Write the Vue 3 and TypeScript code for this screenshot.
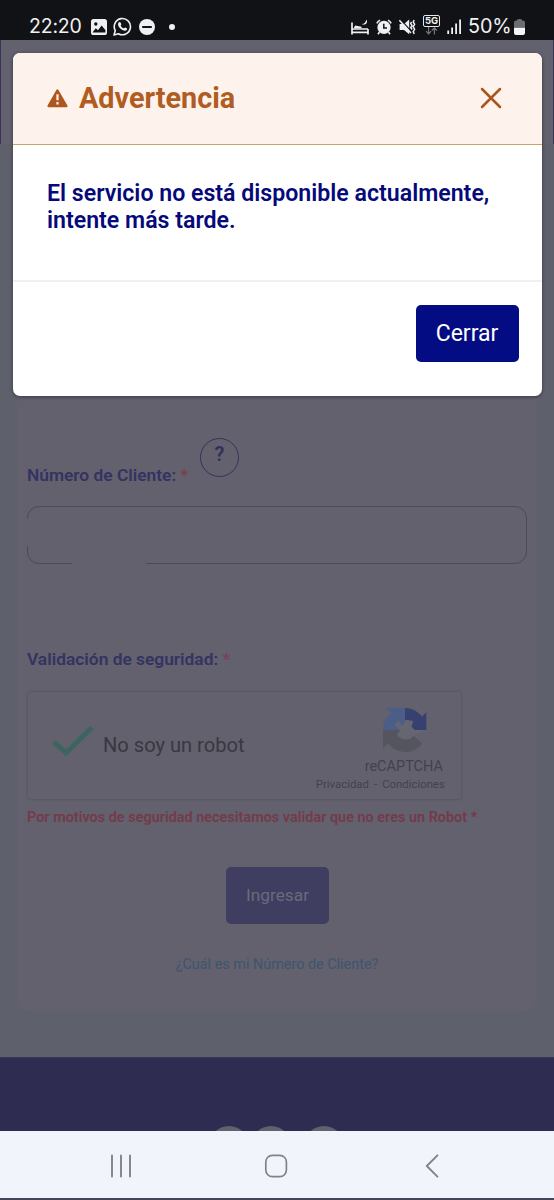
<script setup lang="ts">
const socialLinks: string[] = ['first', 'second', 'third']
</script>

<template>
  <div class="phone">
    <header class="status">
      <div class="status-left">
        <span class="clock">22:20</span>
        <svg class="i-photo" width="16" height="16" viewBox="0 0 16 16">
          <rect width="16" height="16" rx="2.6" fill="#eef0f2" />
          <circle cx="4.8" cy="5" r="1.7" fill="#111216" />
          <path d="M1.6 13.2 L4.8 9.2 L7 11.2 L10.6 6.6 L14.4 11 V13.4 H1.6Z" fill="#111216" />
        </svg>
        <svg class="i-chat" width="19" height="19" viewBox="0 0 19 19">
          <path d="M1 18 L2.3 13.6 A8.1 8.1 0 1 1 5.4 16.7 Z" fill="none" stroke="#eef0f2" stroke-width="1.6" stroke-linejoin="round" />
          <path d="M6.2 5.2 C7 4.6 7.5 5.2 8.3 7 C8.6 7.7 7.3 8.2 7.8 9 C8.6 10.3 9.4 10.9 10.6 11.3 C11.3 11.5 11.6 10.2 12.3 10.4 L14 11.4 C14.5 12 13.5 13.7 11.8 13.7 C8.8 13.6 5.1 10.1 5 7.3 C5 6.4 5.5 5.6 6.2 5.2Z" fill="#eef0f2" />
        </svg>
        <svg class="i-dnd" width="16" height="16" viewBox="0 0 16 16">
          <circle cx="8" cy="8" r="8" fill="#eef0f2" />
          <path d="M3.2 8 H12.8" stroke="#111216" stroke-width="2" />
        </svg>
        <span class="more"></span>
      </div>
      <div class="status-right">
        <svg width="18" height="16" viewBox="0 0 18 16" class="i-bed">
          <path d="M1 3.5 V15.5 M1 10 H17 M1 13.4 H17 M17 10 V15.5" fill="none" stroke="#eef0f2" stroke-width="1.7" />
          <path d="M3 8.6 L4.2 6.4 L10.5 7.8 V9.2 H3Z" fill="#eef0f2" />
          <path d="M15.3 0.4 C17.6 3.4 14 7.2 10.7 4.9 C13.4 5 14.8 3.2 15.3 .4Z" fill="#eef0f2" />
        </svg>
        <svg width="16" height="16" viewBox="0 0 16 16" class="i-alarm">
          <circle cx="8" cy="8.4" r="6.6" fill="#eef0f2" />
          <path d="M7.8 4.7 V9 H11" fill="none" stroke="#111216" stroke-width="1.5" />
          <path d="M.8 4.3 A8 8 0 0 1 4 1.1 M12 1.1 A8 8 0 0 1 15.2 4.3 M3.5 13 L2 15.2 M12.5 13 L14 15.2" fill="none" stroke="#eef0f2" stroke-width="1.6" />
        </svg>
        <svg width="17" height="16" viewBox="0 0 17 16" class="i-mute">
          <path d="M.6 5 H5 L10.2 .6 V15.2 L5 11 H.6Z" fill="#eef0f2" />
          <path d="M1.4 .4 L12.5 12.6" stroke="#111216" stroke-width="1.3" />
          <path d="M.4 1.2 L12 14" stroke="#eef0f2" stroke-width="1.5" />
          <path d="M12.6 3 L11.7 4.5 L13 6.5 L11.8 8.5 L13 10.5 M15.2 1 L14.2 3 L15.6 5.3 L14.2 7.8 L15.6 10.3 L14.2 12.6 L15.2 15" fill="none" stroke="#eef0f2" stroke-width="1.5" />
        </svg>
        <div class="net">
          <span class="net-label">5G</span>
          <svg width="13" height="8" viewBox="0 0 13 8">
            <path d="M3.6 0 V6.8 M1 4.2 L3.6 6.8 L6.2 4.2 M9.4 7.5 V.9 M6.8 3.5 L9.4 .9 L12 3.5" fill="none" stroke="#75767a" stroke-width="1.2" />
          </svg>
        </div>
        <svg width="15" height="15" viewBox="0 0 15 15" class="i-signal">
          <path d="M1.2 11.6 V15 M5.1 8.4 V15 M9.1 4.5 V15 M13.1 .4 V15" stroke="#eef0f2" stroke-width="1.8" />
        </svg>
        <span class="percent">50%</span>
        <svg width="11" height="16" viewBox="0 0 11 16" class="i-battery">
          <path d="M0 8.8 V3.5 Q0 1.5 2 1.5 H3 Q3 0 4.4 0 H6.6 Q8 0 8 1.5 H9 Q11 1.5 11 3.5 V8.8Z" fill="#6c6d70" />
          <path d="M0 8.8 H11 V14 Q11 16 9 16 H2 Q0 16 0 14Z" fill="#f4f5f6" />
        </svg>
      </div>
    </header>

    <main class="page">
      <div class="banner-edge"></div>
      <section class="card">
        <div class="label-row">
          <label class="label">Número de Cliente: <b class="req">*</b></label>
          <span class="help">?</span>
        </div>
        <div class="field">
          <span class="gap-left"></span>
          <span class="gap-bottom"></span>
        </div>
        <div class="label second">Validación de seguridad: <b class="req soft">*</b></div>
        <div class="captcha">
          <svg class="check" width="42" height="32" viewBox="0 0 42 32">
            <path d="M2 17 L14 28 L40 2.5" fill="none" stroke="#3c655f" stroke-width="4.8" />
          </svg>
          <span class="robot">No soy un robot</span>
          <div class="brand">
            <svg class="logo" width="44" height="44" viewBox="0 0 64 64">
              <path d="M32 0 C41.8 0 50.5 4.8 56.5 12.2 L63 6 V32 H32Z" fill="#37416f" />
              <path d="M32 0 H4.6 L12.2 7.5 C4.8 13.5 0 22 0 32 H32Z" fill="#4c5e88" />
              <path d="M0 32 V58 L7.5 51.8 C13.5 59.3 22.3 64 32 64 C42.4 64 51.3 59.5 56.9 51.6 L44.8 40 L32 32Z" fill="#555560" />
              <path d="M17 25 L22.5 18 L28 26 L33 17 L44 19 L41.5 27 L46 32 H63 L45 40.5 C39 48 25 48 20.5 38 L25 32.5Z" fill="#666572" />
            </svg>
            <span class="brand-name">reCAPTCHA</span>
            <span class="brand-links">Privacidad&nbsp;-&nbsp;Condiciones</span>
          </div>
        </div>
        <p class="error">Por motivos de seguridad necesitamos validar que no eres un Robot *</p>
        <button class="enter" type="button">Ingresar</button>
        <a class="which">¿Cuál es mi Número de Cliente?</a>
      </section>
      <footer class="footer">
        <span v-for="s in socialLinks" :key="s" class="social" :class="s"></span>
      </footer>

      <div class="dialog" role="dialog">
        <div class="dialog-head">
          <svg width="21" height="19" viewBox="0 0 21 19" class="warn">
            <path d="M10.4 1.6 L19.4 17 H1.6 Z" fill="#ad571e" stroke="#ad571e" stroke-width="2.4" stroke-linejoin="round" />
            <path d="M10.5 5.2 V11.3 M10.5 13 V15.5" stroke="#fdf3ec" stroke-width="2.2" />
          </svg>
          <h1 class="title">Advertencia</h1>
          <svg width="22" height="22" viewBox="0 0 22 22" class="close">
            <path d="M2 2 L20 20 M20 2 L2 20" stroke="#a8561f" stroke-width="2.5" stroke-linecap="round" />
          </svg>
        </div>
        <div class="dialog-body">El servicio no está disponible actualmente,<br />intente más tarde.</div>
        <div class="dialog-foot">
          <button class="dismiss" type="button">Cerrar</button>
        </div>
      </div>
    </main>

    <nav class="nav">
      <svg width="22" height="24" viewBox="0 0 22 24">
        <path d="M2 1.5 V22.5 M11 1.5 V22.5 M20 1.5 V22.5" stroke="#808388" stroke-width="1.9" stroke-linecap="round" />
      </svg>
      <svg class="home" width="24" height="24" viewBox="0 0 24 24">
        <rect x="1.8" y="1.3" width="20.6" height="21.4" rx="6.6" fill="none" stroke="#808388" stroke-width="1.7" />
      </svg>
      <svg width="14" height="24" viewBox="0 0 14 24">
        <path d="M12.4 1.3 L1.8 12 L12.4 22.7" fill="none" stroke="#808388" stroke-width="1.9" stroke-linecap="round" stroke-linejoin="round" />
      </svg>
    </nav>
  </div>
</template>

<style>
body {
  margin: 0;
}
</style>

<style scoped>
.phone {
  width: 554px;
  height: 1200px;
  display: flex;
  flex-direction: column;
  overflow: hidden;
  font-family: Roboto, "Liberation Sans", sans-serif;
  background: #5e606c;
}
.phone * {
  box-sizing: border-box;
}
.status {
  height: 40px;
  flex: none;
  background: #111216;
  color: #f0f1f3;
  display: flex;
  justify-content: space-between;
  padding: 12px 29px 0 29px;
  font: 400 19.5px/29px Inter, sans-serif;
}
.status-left,
.status-right {
  display: flex;
  height: 29px;
  align-items: center;
}
.clock {
  width: 62px;
  letter-spacing: -0.2px;
}
.i-chat {
  margin-left: 6px;
}
.i-dnd {
  margin-left: 7px;
}
.more {
  width: 6px;
  height: 6px;
  margin-left: 14px;
  border-radius: 50%;
  background: #eef0f2;
}
.i-alarm {
  margin-left: 7px;
}
.i-mute {
  margin-left: 7px;
}
.net {
  width: 17px;
  height: 20px;
  margin: -4px 0 0 7px;
  display: flex;
  flex-direction: column;
  align-items: center;
}
.net-label {
  width: 17px;
  height: 12px;
  flex: none;
  border: 1px solid #e5e7e9;
  border-radius: 2px;
  font: 700 9.5px/10px Inter, sans-serif;
  text-align: center;
}
.net svg {
  flex: none;
}
.i-signal {
  margin-left: 7px;
}
.percent {
  width: 52px;
  padding-left: 6px;
  white-space: nowrap;
  font-size: 19.8px;
  letter-spacing: -0.1px;
}
.i-battery {
  flex: none;
}
.page {
  position: relative;
  flex: 1;
  display: flex;
  flex-direction: column;
  background: #5e606c;
  overflow: hidden;
}
.banner-edge {
  height: 104px;
  flex: none;
  background: #62616d;
  border: solid #35335a;
  border-width: 0 1px;
}
.card {
  width: 519px;
  height: 867px;
  flex: none;
  margin: 0 17px;
  padding: 294px 9px 0 10px;
  background: #62616d;
  border-radius: 0 0 12px 12px;
  display: flex;
  flex-direction: column;
  align-items: flex-start;
}
.label-row {
  height: 48px;
  display: flex;
}
.label {
  color: #343362;
  font-size: 17.35px;
  line-height: 22px;
  font-weight: 600;
  white-space: pre;
}
.label-row .label {
  width: 162px;
  margin-top: 26px;
}
.req {
  color: #7f3d47;
  font-weight: 500;
}
.req.soft {
  color: #7b4254;
}
.help {
  width: 39px;
  height: 39px;
  margin-left: 11px;
  border: 1.4px solid #343261;
  border-radius: 50%;
  color: #31305c;
  font-weight: 600;
  font-size: 20px;
  line-height: 31px;
  text-align: center;
}
.field {
  position: relative;
  width: 500px;
  height: 58px;
  margin-top: 20px;
  border: 1.5px solid #4b4a57;
  border-radius: 12px;
}
.gap-left,
.gap-bottom {
  position: absolute;
  background: #62616d;
}
.gap-left {
  left: -2px;
  top: 12px;
  width: 3px;
  height: 27px;
}
.gap-bottom {
  left: 44px;
  bottom: -2px;
  width: 74px;
  height: 3px;
}
.label.second {
  margin-top: 84px;
  font-size: 17.35px;
}
.captcha {
  width: 435px;
  height: 109px;
  margin-top: 21px;
  border: 1px solid #595966;
  border-radius: 4px;
  box-shadow: 0 0 2px #5b5a67;
  display: flex;
}
.check {
  margin: 33px 0 0 24px;
  flex: none;
}
.robot {
  margin: 40px 0 0 9px;
  color: #383841;
  font-size: 20.1px;
  line-height: 26px;
  white-space: nowrap;
}
.brand {
  margin: 16px 16px 0 auto;
  display: flex;
  flex-direction: column;
  align-items: flex-end;
  color: #42424d;
  white-space: nowrap;
}
.logo {
  margin-right: 18px;
}
.brand-name {
  margin: 6px 2px 0 0;
  font-size: 14.5px;
  line-height: 18px;
}
.brand-links {
  font-size: 11.4px;
  line-height: 16px;
  word-spacing: 2.2px;
}
.error {
  margin: 8px 0 0;
  color: #743a4a;
  font-size: 14.44px;
  line-height: 20px;
  font-weight: 600;
  white-space: nowrap;
}
.enter {
  width: 103px;
  height: 57px;
  margin: 39px 0 0 199px;
  padding: 0;
  border: 0;
  border-radius: 5px;
  background: #3f3d60;
  color: #6b6a7a;
  font: 400 17.3px/57px Roboto, sans-serif;
}
.which {
  align-self: center;
  margin-top: 31px;
  color: #3d5570;
  font-size: 14.4px;
  line-height: 20px;
  white-space: nowrap;
}
.footer {
  margin-top: 46px;
  flex: 1;
  background: #2e2c50;
  border-top: 1px solid #35345a;
  padding: 68px 0 0 209px;
  display: flex;
}
.social {
  width: 40px;
  height: 40px;
  flex: none;
  margin-right: 2px;
  border-radius: 50%;
  background: #62616d;
}
.third {
  margin-left: 11px;
}
.dialog {
  position: absolute;
  left: 13px;
  top: 13px;
  width: 529px;
  height: 343px;
  border-radius: 7px;
  background: #fff;
  overflow: hidden;
  box-shadow: 0 1px 3px 1px #484854;
}
.dialog-head {
  height: 92px;
  display: flex;
  align-items: center;
  background: #fdf3ec;
  border-bottom: 1px solid #c7a469;
  padding: 0 40px 1px 34px;
}
.title {
  margin: 0 0 0 11px;
  color: #b15c22;
  font-size: 28.8px;
  line-height: 36px;
  font-weight: 700;
}
.close {
  margin-left: auto;
}
.dialog-body {
  height: 137px;
  padding: 35px 0 0 34px;
  border-bottom: 2px solid #f0f0f2;
  color: #05097a;
  font-size: 23.15px;
  line-height: 27.4px;
  font-weight: 600;
  white-space: nowrap;
}
.dialog-foot {
  display: flex;
  justify-content: flex-end;
  padding: 23px 23px 0 0;
}
.dismiss {
  width: 103px;
  height: 57px;
  padding: 0 1px 0 0;
  border: 0;
  border-radius: 5px;
  background: #030c82;
  color: #fff;
  font: 400 23px/57px Roboto, sans-serif;
}
.nav {
  height: 69px;
  flex: none;
  display: flex;
  justify-content: space-between;
  align-items: flex-start;
  background: #f1f5fb;
  border-bottom: 2px solid #45465d;
  padding: 23px 115px 0 110px;
}
.home {
  margin-right: 5px;
}
</style>
